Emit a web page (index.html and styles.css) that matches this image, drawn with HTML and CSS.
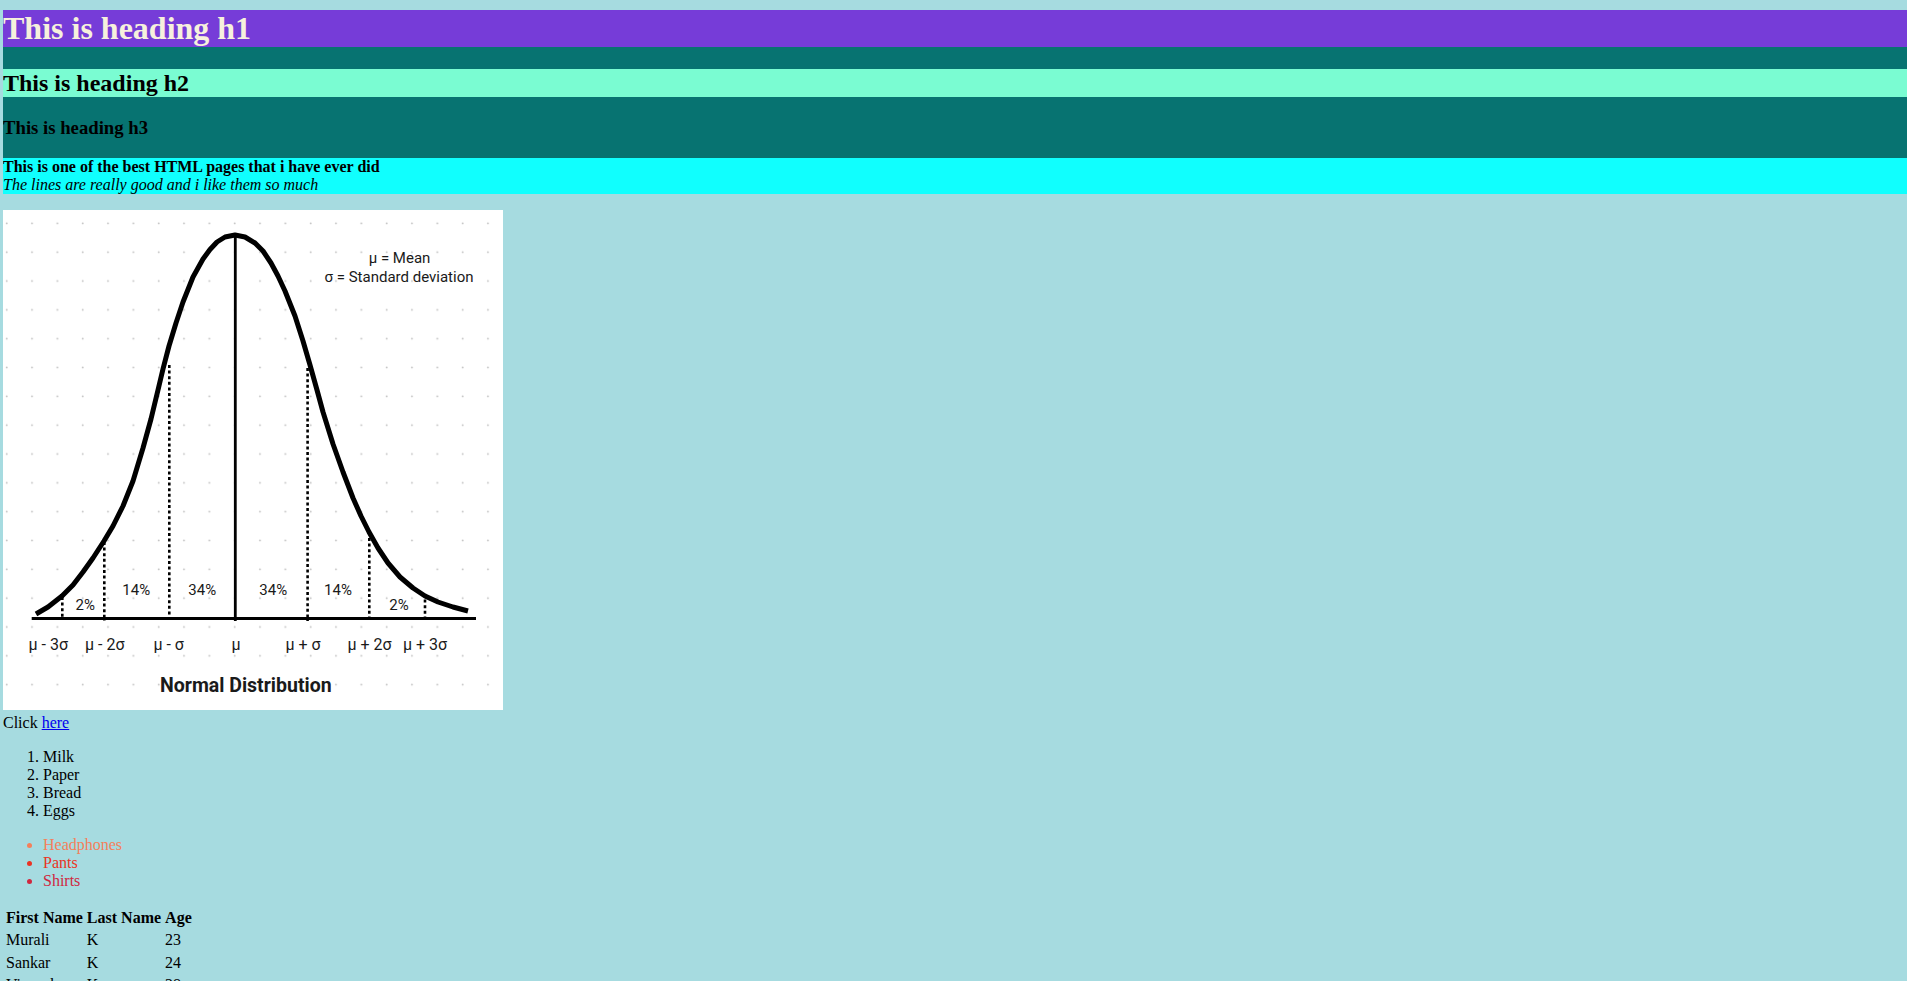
FILE: index.html
```html
<!DOCTYPE html>
<html>
<head>
<meta charset="utf-8">
<title>My page</title>
<link rel="stylesheet" href="styles.css">
</head>
<body>
<div class="banner">
  <h1 class="title">This is heading h1</h1>
  <h2 class="sub">This is heading h2</h2>
  <h3 class="small">This is heading h3</h3>
</div>
<div class="note"><b>This is one of the best HTML pages that i have ever did</b><br><i>The lines are really good and i like them so much</i></div>
<p class="figure"><svg class="chart" width="500" height="500" viewBox="0 0 500 500" xmlns="http://www.w3.org/2000/svg">
  <defs>
    <pattern id="dots" width="25.33" height="28.83" patternUnits="userSpaceOnUse">
      <circle cx="3.7" cy="13.3" r="0.95" class="dot"/>
    </pattern>
  </defs>
  <rect width="500" height="500" class="paper"/>
  <rect width="500" height="500" fill="url(#dots)"/>
  <g class="dotted">
    <line x1="59.3" y1="387" x2="59.3" y2="410"/>
    <line x1="101.3" y1="332" x2="101.3" y2="411"/>
    <line x1="166.3" y1="155" x2="166.3" y2="410"/>
    <line x1="304.6" y1="158" x2="304.6" y2="411"/>
    <line x1="366.3" y1="328" x2="366.3" y2="410"/>
    <line x1="422" y1="384" x2="422" y2="410"/>
  </g>
  <line class="axis" x1="28.7" y1="408.5" x2="473" y2="408.5"/>
  <line class="mid" x1="232.3" y1="25" x2="232.3" y2="411"/>
  <polyline class="curve" points="33,404 45,397 59,386 70,375 80,362 90,348 101,331 110,316 120,296 130,271 140,238 148,209 155,180 160,159 166,136 173,113 180,92 190,67 200,49 207,39.5 214,32 222,27 232,25 242,27 252,33 260,41 268,53 275,66 282,81 292,106 300,131 307,155 314,180 320,202 330,234 340,262 350,288 358,306 366,322 375,338 385,353 397,367 410,378 422,386 435,392 450,397 465,401"/>
  <g class="labels">
    <text class="legend" x="396.5" y="53">μ = Mean</text>
    <text class="legend" x="396" y="72">σ = Standard deviation</text>
    <text class="pct" x="82.3" y="400">2%</text>
    <text class="pct" x="133.3" y="385">14%</text>
    <text class="pct" x="199.3" y="385">34%</text>
    <text class="pct" x="270.3" y="385">34%</text>
    <text class="pct" x="335" y="385">14%</text>
    <text class="pct" x="396" y="400">2%</text>
    <text class="ax" x="45.3" y="440">μ - 3σ</text>
    <text class="ax" x="101.8" y="440">μ - 2σ</text>
    <text class="ax" x="165.7" y="440">μ - σ</text>
    <text class="ax" x="233" y="440">μ</text>
    <text class="ax" x="300" y="440">μ + σ</text>
    <text class="ax" x="366.5" y="440">μ + 2σ</text>
    <text class="ax" x="422" y="440">μ + 3σ</text>
    <text class="ttl" x="242.8" y="482">Normal Distribution</text>
  </g>
</svg><br>Click <a href="#">here</a></p>
<ol class="shopping">
  <li>Milk</li>
  <li>Paper</li>
  <li>Bread</li>
  <li>Eggs</li>
</ol>
<ul class="clothes">
  <li class="c1">Headphones</li>
  <li class="c2">Pants</li>
  <li class="c3">Shirts</li>
</ul>
<table class="people">
  <tr><th>First Name</th><th>Last Name</th><th>Age</th></tr>
  <tr><td>Murali</td><td>K</td><td>23</td></tr>
  <tr><td>Sankar</td><td>K</td><td>24</td></tr>
  <tr><td>Vignesh</td><td>K</td><td>28</td></tr>
</table>
</body>
</html>
```
FILE: styles.css
```css
body {
  margin: 10px 0 0 3px;
  background: #a6dbe0;
  color: #000;
  font-family: "Liberation Serif", "Times New Roman", serif;
  font-size: 16px;
  line-height: 1.13;
}

.banner {
  background: #077371;
  display: flow-root;
}

.title {
  margin: 0 0 22px;
  font-size: 32px;
  line-height: 37px;
  background: #763cd8;
  color: #f6f1dc;
}

.sub {
  margin: 0;
  font-size: 24px;
  line-height: 28px;
  background: #7afcd2;
}

.small {
  margin: 20px 0 19px;
  font-size: 18.72px;
  line-height: 21.5px;
}

.note {
  background: #10fffe;
}

.figure {
  margin: 16px 0;
}

.chart {
  vertical-align: baseline;
}

.paper { fill: #fff; }
.dot { fill: #c2c2c2; }

.dotted line {
  stroke: #000;
  stroke-width: 2.6;
  stroke-dasharray: 3 2.6;
}

.axis {
  stroke: #000;
  stroke-width: 3;
}

.mid {
  stroke: #000;
  stroke-width: 2.8;
}

.curve {
  fill: none;
  stroke: #000;
  stroke-width: 5;
  stroke-linejoin: round;
}

.labels text {
  font-family: Roboto, "Noto Sans", sans-serif;
  text-anchor: middle;
  fill: #1a1a1a;
}

.legend { font-size: 15px; }
.pct { font-size: 15px; }
.ax { font-size: 16px; }
.ttl { font-size: 19.5px; font-weight: 700; fill: #000; }

a { color: #0000ee; }

.shopping, .clothes {
  margin: 16px 0;
  padding-left: 40px;
}

.c1 { color: #f5805a; }
.c2 { color: #ea3323; }
.c3 { color: #d0283f; }

.people {
  border-spacing: 2px;
}

.people th, .people td {
  padding: 1px;
}

.people th {
  text-align: left;
}
```
